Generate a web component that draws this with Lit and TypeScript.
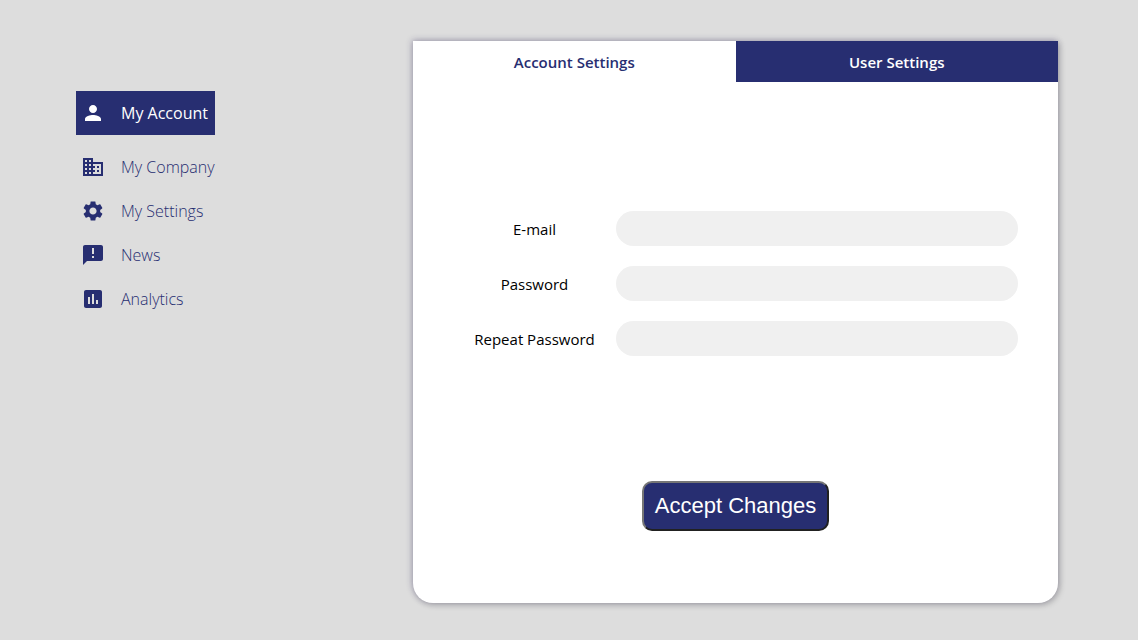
import { LitElement, html, css, svg } from "lit";
import { customElement, state } from "lit/decorators.js";
import { classMap } from "lit/directives/class-map.js";

const NAV = [
  {
    label: "My Account",
    icon: svg`<path d="M12 12c2.21 0 4-1.79 4-4s-1.79-4-4-4-4 1.79-4 4 1.79 4 4 4zm0 2c-2.67 0-8 1.34-8 4v2h16v-2c0-2.66-5.33-4-8-4z"/>`,
  },
  {
    label: "My Company",
    icon: svg`<path d="M12 7V3H2v18h20V7H12zM6 19H4v-2h2v2zm0-4H4v-2h2v2zm0-4H4V9h2v2zm0-4H4V5h2v2zm4 12H8v-2h2v2zm0-4H8v-2h2v2zm0-4H8V9h2v2zm0-4H8V5h2v2zm10 12h-8v-2h2v-2h-2v-2h2v-2h-2V9h8v10zm-2-8h-2v2h2v-2zm0 4h-2v2h2v-2z"/>`,
  },
  {
    label: "My Settings",
    icon: svg`<path d="M19.14 12.94c.04-.3.06-.61.06-.94 0-.32-.02-.64-.07-.94l2.03-1.58c.18-.14.23-.41.12-.61l-1.92-3.32c-.12-.22-.37-.29-.59-.22l-2.39.96c-.5-.38-1.03-.7-1.62-.94l-.36-2.54c-.04-.24-.24-.41-.48-.41h-3.84c-.24 0-.43.17-.47.41l-.36 2.54c-.59.24-1.13.57-1.62.94l-2.39-.96c-.22-.08-.47 0-.59.22L2.74 8.87c-.12.21-.08.47.12.61l2.03 1.58c-.05.3-.09.63-.09.94s.02.64.07.94l-2.03 1.58c-.18.14-.23.41-.12.61l1.92 3.32c.12.22.37.29.59.22l2.39-.96c.5.38 1.03.7 1.62.94l.36 2.54c.05.24.24.41.48.41h3.84c.24 0 .44-.17.47-.41l.36-2.54c.59-.24 1.13-.56 1.62-.94l2.39.96c.22.08.47 0 .59-.22l1.92-3.32c.12-.22.07-.47-.12-.61l-2.01-1.58zM12 15.6c-1.98 0-3.6-1.62-3.6-3.6s1.62-3.6 3.6-3.6 3.6 1.62 3.6 3.6-1.62 3.6-3.6 3.6z"/>`,
  },
  {
    label: "News",
    icon: svg`<path d="M20 2H4c-1.1 0-1.99.9-1.99 2L2 22l4-4h14c1.1 0 2-.9 2-2V4c0-1.1-.9-2-2-2zm-7 9h-2V5h2v6zm0 4h-2v-2h2v2z"/>`,
  },
  {
    label: "Analytics",
    icon: svg`<path d="M19 3H5c-1.1 0-2 .9-2 2v14c0 1.1.9 2 2 2h14c1.1 0 2-.9 2-2V5c0-1.1-.9-2-2-2zM9 17H7v-7h2v7zm4 0h-2V7h2v10zm4 0h-2v-4h2v4z"/>`,
  },
];

const FIELDS = [
  { id: "email", label: "E-mail", type: "email" },
  { id: "password", label: "Password", type: "password" },
  { id: "repeat", label: "Repeat Password", type: "password" },
];

@customElement("side-nav")
export class SideNav extends LitElement {
  @state() private active = 0;

  static styles = css`
    :host {
      display: block;
    }
    .list {
      display: flex;
      flex-direction: column;
      width: fit-content;
      margin: 0;
      padding: 0;
      list-style: none;
    }
    .link {
      display: flex;
      align-items: center;
      gap: 16px;
      height: 44px;
      padding: 0 0 0 5px;
      color: #272e71;
      font-size: 16px;
      font-weight: 300;
      text-decoration: none;
      white-space: nowrap;
    }
    .active {
      margin-bottom: 10px;
      background: #272e71;
      color: #fff;
      font-weight: 400;
    }
    .icon {
      flex: none;
      width: 24px;
      height: 24px;
      fill: currentColor;
    }
  `;

  render() {
    return html`<nav aria-label="Main">
      <ul class="list">
        ${NAV.map(
          (item, i) => html`<li>
            <a
              class=${classMap({ link: true, active: i === this.active })}
              href="#"
              @click=${(e: Event) => {
                e.preventDefault();
                this.active = i;
              }}
            >
              <svg class="icon" viewBox="0 0 24 24" aria-hidden="true">${item.icon}</svg>
              <span>${item.label}</span>
            </a>
          </li>`
        )}
      </ul>
    </nav>`;
  }
}

@customElement("settings-card")
export class SettingsCard extends LitElement {
  @state() private tab = 0;

  static styles = css`
    :host {
      display: block;
      overflow: hidden;
      border-radius: 0 0 20px 20px;
      background: #fff;
      box-shadow: -1px -1px 6px rgba(39, 30, 90, 0.3), 2px 2px 6px rgba(0, 0, 0, 0.2);
    }
    .tabs {
      display: grid;
      grid-template-columns: 1fr 1fr;
    }
    .tab {
      height: 41px;
      padding: 0;
      border: 0;
      background: #272e71;
      color: #fff;
      font: inherit;
      font-weight: 600;
      cursor: pointer;
    }
    .selected {
      background: #fff;
      color: #272e71;
    }
    .form {
      display: flex;
      flex-direction: column;
      align-items: center;
      gap: 125px;
      padding: 129px 40px 72px;
    }
    .fields {
      display: flex;
      flex-direction: column;
      gap: 20px;
      width: 100%;
    }
    .field {
      display: grid;
      grid-template-columns: 163px 1fr;
      align-items: center;
    }
    .label {
      color: #000;
      text-align: center;
    }
    .input {
      box-sizing: border-box;
      width: 100%;
      height: 35px;
      padding: 0 16px;
      border: 0;
      border-radius: 20px;
      background: #f0f0f0;
      font: inherit;
    }
    .submit {
      height: 50px;
      padding: 0 11px;
      border: 2px solid;
      border-color: #767676 #212121 #212121 #767676;
      border-radius: 10px;
      background: #272e71;
      color: #fff;
      font: 22px "Liberation Sans", Arial, sans-serif;
      cursor: pointer;
    }
  `;

  render() {
    return html`<div class="tabs" role="tablist">
        ${["Account Settings", "User Settings"].map(
          (name, i) => html`<button
            class=${classMap({ tab: true, selected: i === this.tab })}
            type="button"
            role="tab"
            aria-selected=${i === this.tab}
            @click=${() => (this.tab = i)}
          >
            ${name}
          </button>`
        )}
      </div>
      <form class="form" @submit=${(e: Event) => e.preventDefault()}>
        <div class="fields">
          ${FIELDS.map(
            (f) => html`<div class="field">
              <label class="label" for=${f.id}>${f.label}</label>
              <input class="input" id=${f.id} type=${f.type} />
            </div>`
          )}
        </div>
        <button class="submit" type="submit">Accept Changes</button>
      </form>`;
  }
}

@customElement("app-root")
export class AppRoot extends LitElement {
  static styles = css`
    :host {
      display: grid;
      grid-template-columns: 337fr 645fr;
      align-items: start;
      box-sizing: border-box;
      min-height: 100vh;
      padding: 41px 80px 36px 76px;
      background: #ddd;
      font: 15px/20px "Segoe UI", "Open Sans", "Noto Sans", sans-serif;
    }
    .nav {
      padding-top: 50px;
    }
  `;

  render() {
    return html`<side-nav class="nav"></side-nav>
      <settings-card></settings-card>`;
  }
}
